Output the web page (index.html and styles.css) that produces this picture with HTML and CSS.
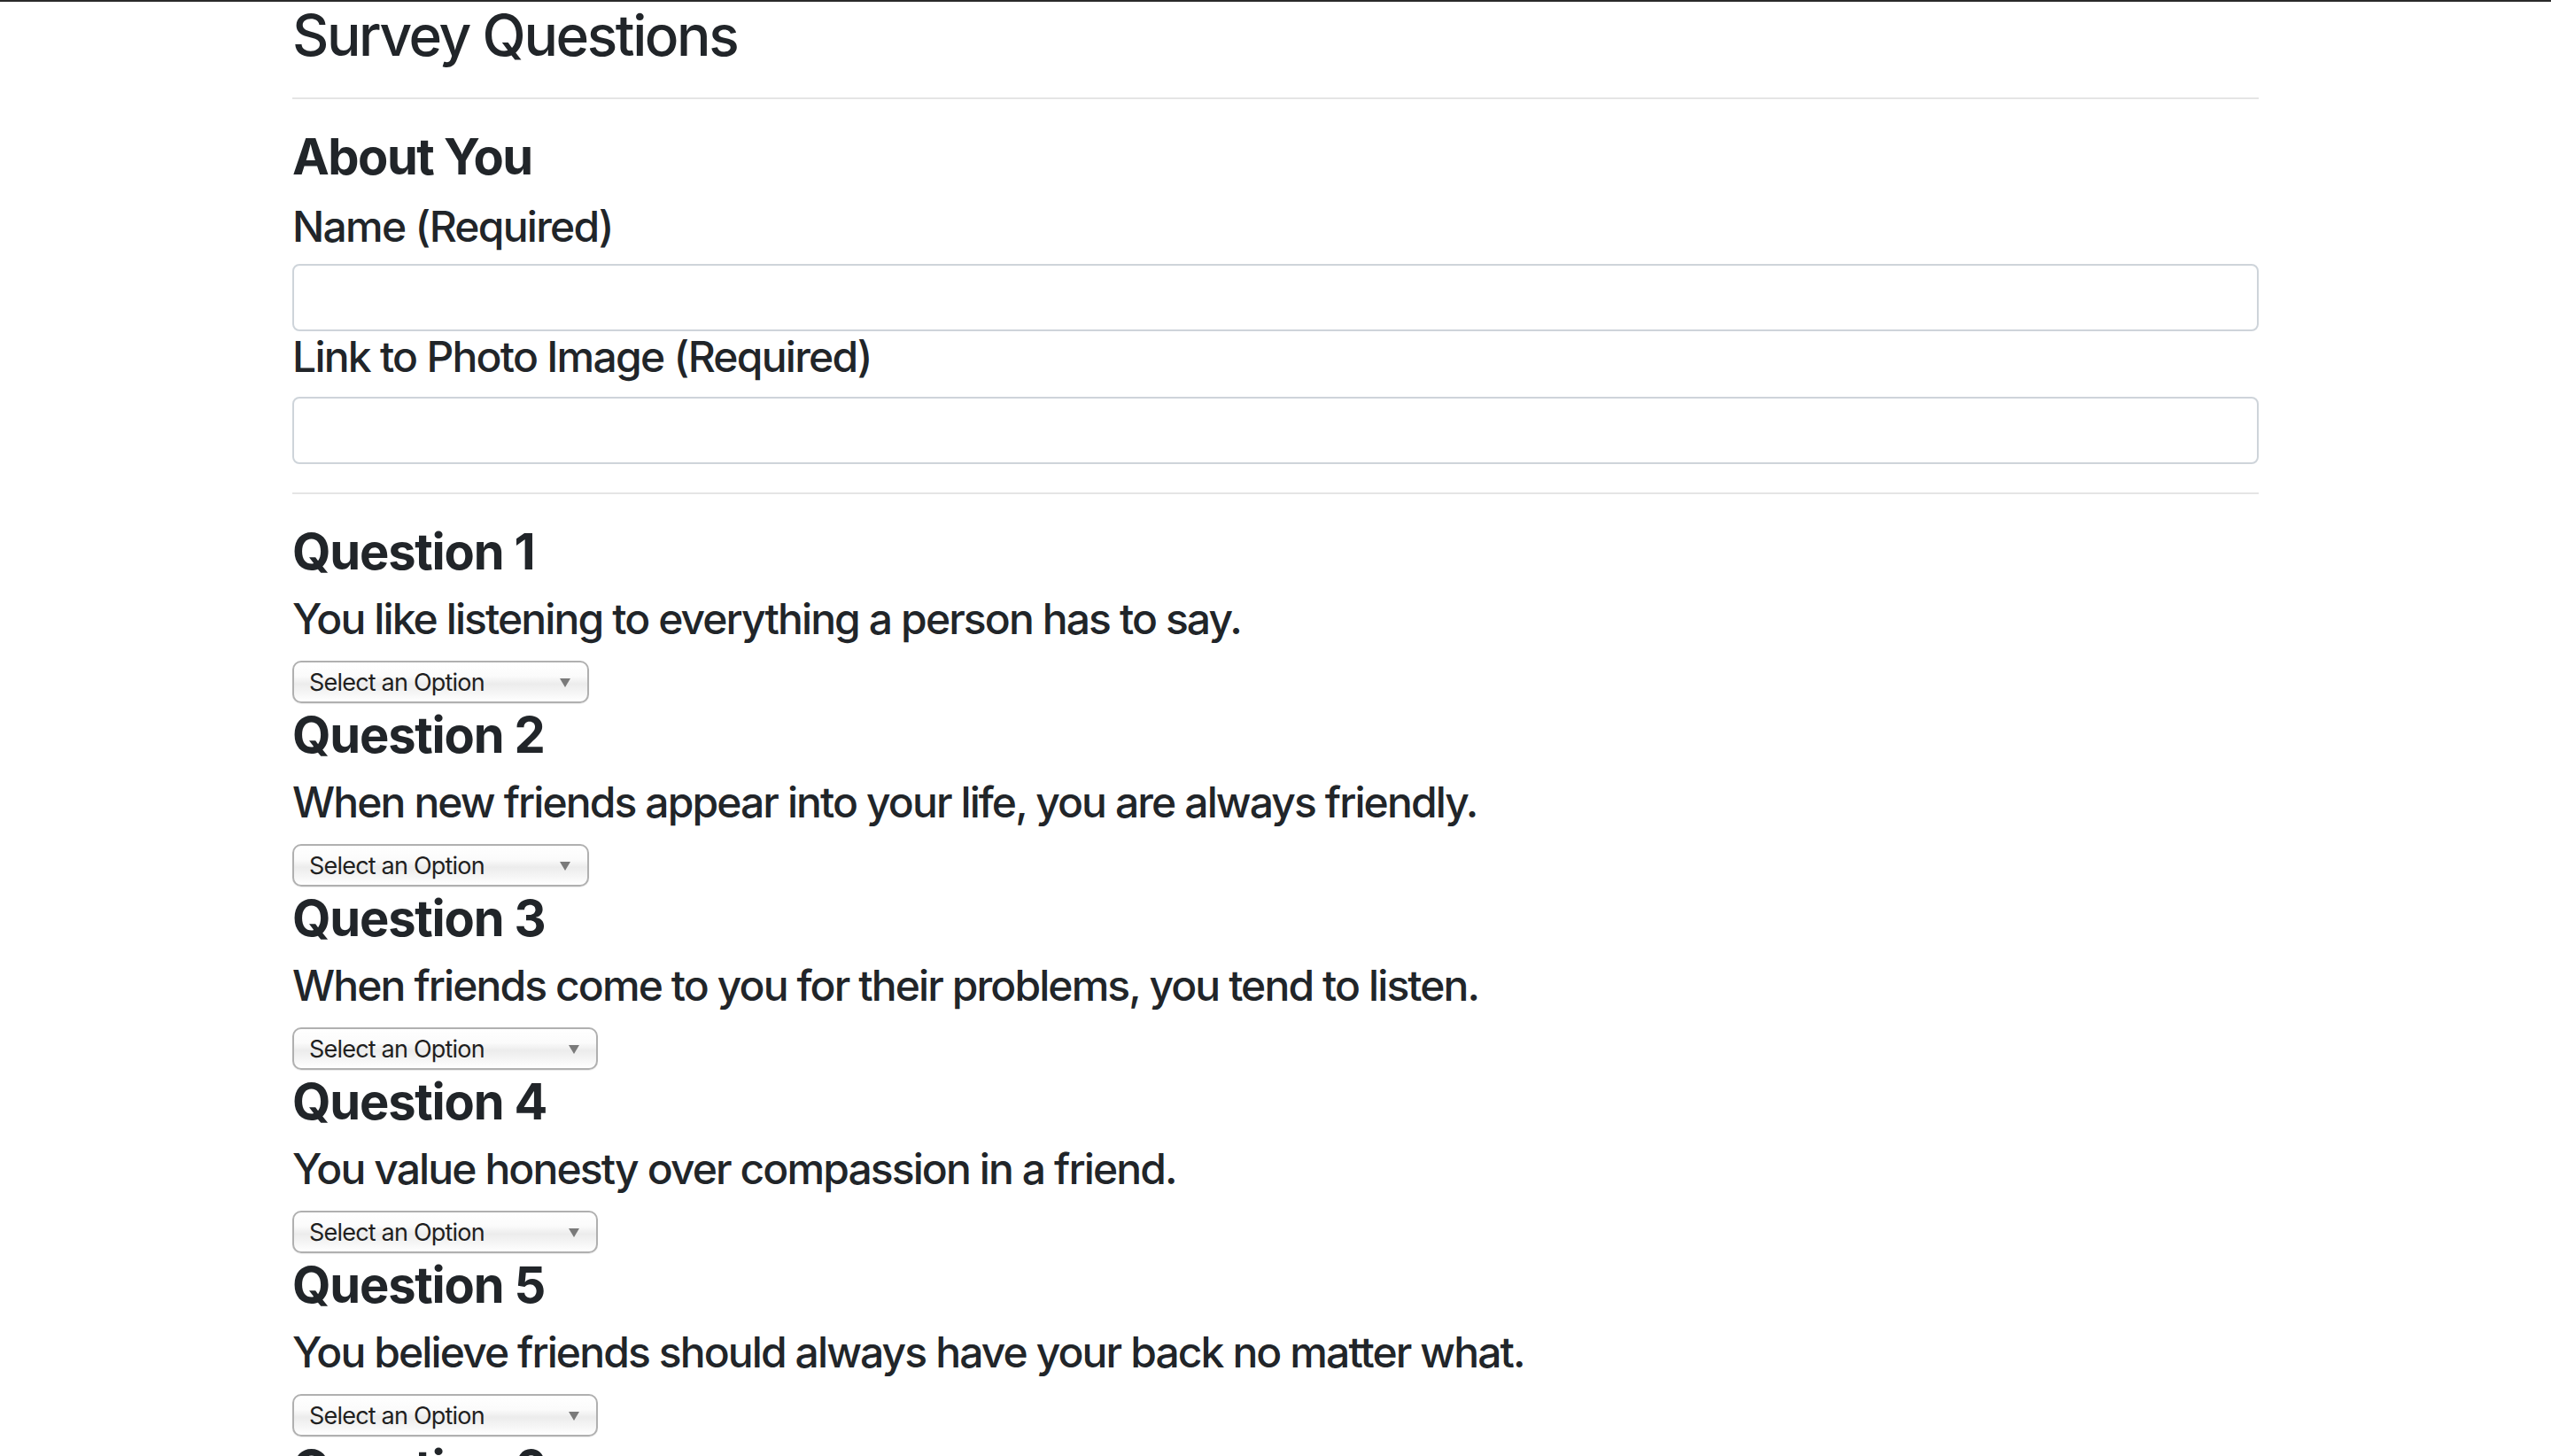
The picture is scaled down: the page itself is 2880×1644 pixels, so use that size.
FILE: index.html
```html
<!DOCTYPE html>
<html lang="en">
<head>
<meta charset="utf-8">
<title>Survey Questions</title>
<link rel="stylesheet" href="styles.css">
</head>
<body>
<div class="topline"></div>
<main class="container">
  <h2 class="page-title">Survey Questions</h2>
  <hr class="rule">
  <section class="about">
    <h3 class="section-title">About You</h3>
    <label class="field-label" for="name">Name (Required)</label>
    <input class="text-input" id="name" type="text">
    <label class="field-label spaced" for="photo">Link to Photo Image (Required)</label>
    <input class="text-input" id="photo" type="text">
  </section>
  <hr class="rule">
  <section class="questions">
    <div class="question">
      <h3 class="q-title">Question 1</h3>
      <p class="q-text">You like listening to everything a person has to say.</p>
      <span class="select-wrap narrow"><select class="q-select"><option>Select an Option</option><option>1 (Strongly Disagree)</option></select></span>
    </div>
    <div class="question">
      <h3 class="q-title">Question 2</h3>
      <p class="q-text">When new friends appear into your life, you are always friendly.</p>
      <span class="select-wrap narrow"><select class="q-select"><option>Select an Option</option><option>1 (Strongly Disagree)</option></select></span>
    </div>
    <div class="question">
      <h3 class="q-title">Question 3</h3>
      <p class="q-text">When friends come to you for their problems, you tend to listen.</p>
      <span class="select-wrap wide"><select class="q-select"><option>Select an Option</option><option>1 (Strongly Disagree)</option></select></span>
    </div>
    <div class="question">
      <h3 class="q-title">Question 4</h3>
      <p class="q-text">You value honesty over compassion in a friend.</p>
      <span class="select-wrap wide"><select class="q-select"><option>Select an Option</option><option>1 (Strongly Disagree)</option></select></span>
    </div>
    <div class="question">
      <h3 class="q-title">Question 5</h3>
      <p class="q-text">You believe friends should always have your back no matter what.</p>
      <span class="select-wrap wide"><select class="q-select"><option>Select an Option</option><option>1 (Strongly Disagree)</option></select></span>
    </div>
    <div class="question">
      <h3 class="q-title">Question 6</h3>
      <p class="q-text">You prefer a few close friends over many acquaintances.</p>
      <span class="select-wrap wide"><select class="q-select"><option>Select an Option</option><option>1 (Strongly Disagree)</option></select></span>
    </div>
  </section>
</main>
</body>
</html>
```

FILE: styles.css
```css
html, body {
  margin: 0;
  padding: 0;
  background: #ffffff;
}

body {
  font-family: Inter, "Liberation Sans", Arial, sans-serif;
  color: #212529;
  overflow: hidden;
}

.topline {
  height: 2px;
  background: #2a2a2a;
}

.container {
  width: 2220px;
  margin: 0 auto;
  display: flex;
  flex-direction: column;
}

.page-title {
  margin: -1px 0 0 0;
  font-size: 64px;
  line-height: 77px;
  font-weight: 500;
  letter-spacing: -2.4px;
}

.rule {
  margin: 32px 0;
  border: 0;
  border-top: 2px solid #e5e5e5;
  width: 100%;
}

.about {
  display: flex;
  flex-direction: column;
}

.section-title,
.q-title {
  font-size: 56px;
  line-height: 67px;
  font-weight: 700;
}

.section-title {
  margin: 0 0 16px 0;
  letter-spacing: -1.5px;
}

.q-title {
  margin: 0 0 13px 0;
  letter-spacing: -1.2px;
}

.field-label {
  font-size: 48px;
  line-height: 58px;
  font-weight: 500;
  margin-bottom: 13px;
  letter-spacing: -1.75px;
}

.field-label.spaced {
  margin-bottom: 16px;
}

.text-input {
  box-sizing: border-box;
  height: 76px;
  width: 100%;
  border: 2px solid #ced4da;
  border-radius: 8px;
  background: #fff;
  margin: 0;
  padding: 0 24px;
  font: inherit;
  font-size: 32px;
}

.questions {
  display: flex;
  flex-direction: column;
}

.question {
  display: flex;
  flex-direction: column;
  align-items: flex-start;
}

.q-text {
  margin: 0 0 18px 0;
  font-size: 48px;
  line-height: 58px;
  font-weight: 500;
  letter-spacing: -1.9px;
}

.select-wrap {
  position: relative;
  display: block;
  height: 48px;
  margin-bottom: 3px;
}

.select-wrap.narrow { width: 335px; }
.select-wrap.wide { width: 345px; }

.select-wrap::after {
  content: "";
  position: absolute;
  right: 21px;
  top: 20px;
  width: 0;
  height: 0;
  border-left: 6px solid transparent;
  border-right: 6px solid transparent;
  border-top: 10px solid #7a7a7a;
  pointer-events: none;
}

.q-select {
  -webkit-appearance: none;
  appearance: none;
  box-sizing: border-box;
  width: 100%;
  height: 48px;
  margin: 0;
  padding: 0 40px 0 17px;
  border: 2px solid #b0b0b0;
  border-radius: 10px;
  background: linear-gradient(#ffffff 0%, #fbfbfb 35%, #ececec 55%, #f6f6f6 80%, #ffffff 100%);
  box-shadow: 0 1px 1px rgba(0,0,0,0.08);
  font-family: Inter, "Liberation Sans", Arial, sans-serif;
  font-size: 27px;
  letter-spacing: -0.8px;
  color: #1f1f1f;
}
```
